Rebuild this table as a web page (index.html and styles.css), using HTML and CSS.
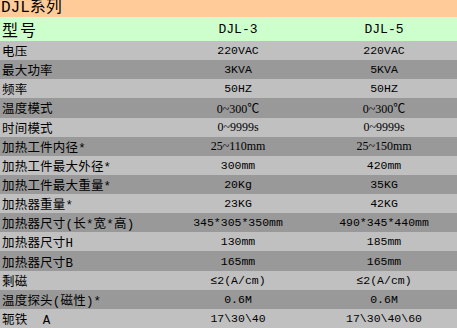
FILE: index.html
```html
<!DOCTYPE html>
<html lang="zh-CN">
<head>
<meta charset="utf-8">
<title>DJL系列</title>
<link rel="stylesheet" href="styles.css">
</head>
<body>
<div class="sheet">
  <div class="title">DJL系列</div>
  <div class="row head"><span class="label">型号</span><span class="val">DJL-3</span><span class="val">DJL-5</span></div>
  <div class="row light"><span class="label">电压</span><span class="val">220VAC</span><span class="val">220VAC</span></div>
  <div class="row dark"><span class="label">最大功率</span><span class="val">3KVA</span><span class="val">5KVA</span></div>
  <div class="row light"><span class="label">频率</span><span class="val">50HZ</span><span class="val">50HZ</span></div>
  <div class="row dark"><span class="label">温度模式</span><span class="val serif">0~300℃</span><span class="val serif">0~300℃</span></div>
  <div class="row light"><span class="label">时间模式</span><span class="val serif">0~9999s</span><span class="val serif">0~9999s</span></div>
  <div class="row dark"><span class="label">加热工件内径*</span><span class="val serif">25~110mm</span><span class="val serif">25~150mm</span></div>
  <div class="row light"><span class="label">加热工件最大外径*</span><span class="val">300mm</span><span class="val">420mm</span></div>
  <div class="row dark"><span class="label">加热工件最大重量*</span><span class="val">20Kg</span><span class="val">35KG</span></div>
  <div class="row light"><span class="label">加热器重量*</span><span class="val">23KG</span><span class="val">42KG</span></div>
  <div class="row dark"><span class="label">加热器尺寸(长*宽*高)</span><span class="val">345*305*350mm</span><span class="val">490*345*440mm</span></div>
  <div class="row light"><span class="label">加热器尺寸H</span><span class="val">130mm</span><span class="val">185mm</span></div>
  <div class="row dark"><span class="label">加热器尺寸B</span><span class="val">165mm</span><span class="val">165mm</span></div>
  <div class="row light"><span class="label">剩磁</span><span class="val">≤2(A/cm)</span><span class="val">≤2(A/cm)</span></div>
  <div class="row dark"><span class="label">温度探头(磁性)*</span><span class="val">0.6M</span><span class="val">0.6M</span></div>
  <div class="row light"><span class="label">轭铁  A</span><span class="val">17\30\40</span><span class="val">17\30\40\60</span></div>
</div>
</body>
</html>
```
FILE: styles.css
```css
html, body {
  margin: 0;
  padding: 0;
  background: #ffffff;
}
.sheet {
  width: 457px;
  height: 328px;
  display: grid;
  grid-template-rows: 17px repeat(16, 1fr);
  color: #000000;
  font-family: "Liberation Mono", "Noto Sans CJK SC", monospace;
}
.title {
  background: #ffcc99;
  font-size: 16px;
  line-height: 17px;
  padding-left: 1px;
}
.row {
  display: grid;
  grid-template-columns: 165px 146px 146px;
  align-items: center;
  font-size: 11.5px;
}
.row.head { background: #ccffcc; font-size: 13px; }
.row.light { background: #c0c0c0; }
.row.dark { background: #999999; }
.label {
  padding-left: 2px;
  white-space: pre;
  font-size: 12.5px;
  letter-spacing: 0.2px;
}
.head .label { font-size: 16px; letter-spacing: 2px; }
.val {
  text-align: center;
  white-space: pre;
}
.val.serif {
  font-family: "Liberation Serif", "Noto Sans CJK SC", serif;
  font-size: 12px;
}
```
